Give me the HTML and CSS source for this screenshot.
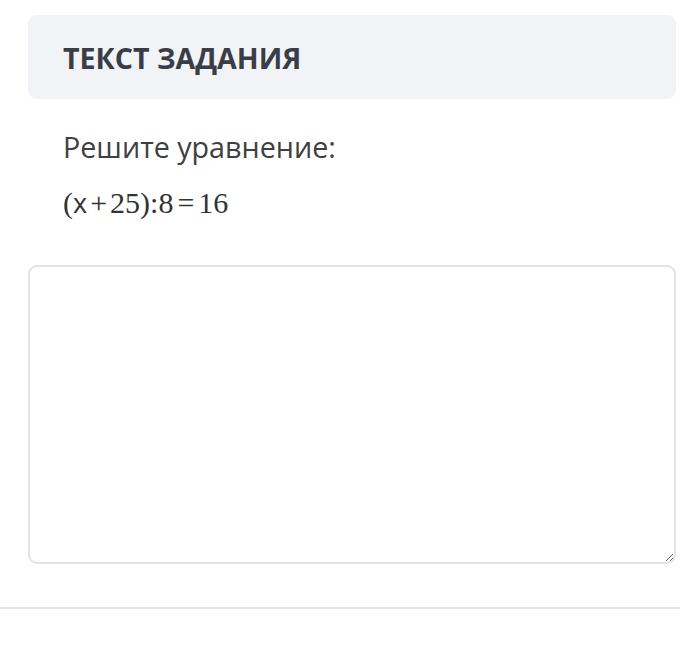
FILE: index.html
```html
<!DOCTYPE html>
<html lang="ru">
<head>
    <meta charset="UTF-8">
    <meta name="viewport" content="width=device-width, initial-scale=1.0">
    <title>Текст задания</title>
    <link rel="stylesheet" href="styles.css">
</head>
<body>

<!-- Блок задания -->
<div class="task">
    <div class="task-header">
        <h2>ТЕКСТ ЗАДАНИЯ</h2>
    </div>

    <div class="task-body">
        <p class="task-text">Решите уравнение:</p>
        <p class="task-formula">(<span class="var">x</span><span class="op">+</span>25):8<span class="rel">=</span>16</p>
    </div>

    <!-- Поле для ответа -->
    <textarea class="answer"></textarea>
</div>

<hr class="divider">

</body>
</html>
```

FILE: styles.css
```css
/* Общие стили */
body, html {
    margin: 0;
    padding: 0;
    background-color: #ffffff;
    font-family: 'Open Sans', sans-serif;
    overflow: hidden;
}

.task {
    padding: 15px 4px 0 28px;
}

/* Заголовок */
.task-header {
    background-color: #f2f3f6;
    border-radius: 9px;
    height: 84px;
    display: flex;
    align-items: center;
    padding-left: 35px;
}

.task-header h2 {
    margin: 0;
    font-size: 28.6px;
    font-weight: 700;
    color: #383d47;
}

.task-body {
    padding: 28px 0 0 35px;
    height: 166px;
    box-sizing: border-box;
}

.task-text {
    margin: 0;
    font-size: 28.7px;
    color: #404040;
    line-height: 40px;
}

/* Формула */
.task-formula {
    margin: 16px 0 0 0;
    font-family: 'Liberation Serif', serif;
    font-size: 30px;
    color: #333;
    line-height: 40px;
}

.task-formula .var {
    font-family: 'Open Sans', sans-serif;
    font-size: 27px;
}

.task-formula .op {
    margin: 0 3px;
}

.task-formula .rel {
    margin: 0 4px;
}

.answer {
    display: block;
    width: 100%;
    height: 299px;
    box-sizing: border-box;
    border: 2px solid #e3e3e3;
    border-radius: 9px;
    background-color: #fff;
    margin-top: 0;
}

.divider {
    border: none;
    border-top: 2px solid #e3e3e3;
    margin: 43px 0 0 0;
}
```
